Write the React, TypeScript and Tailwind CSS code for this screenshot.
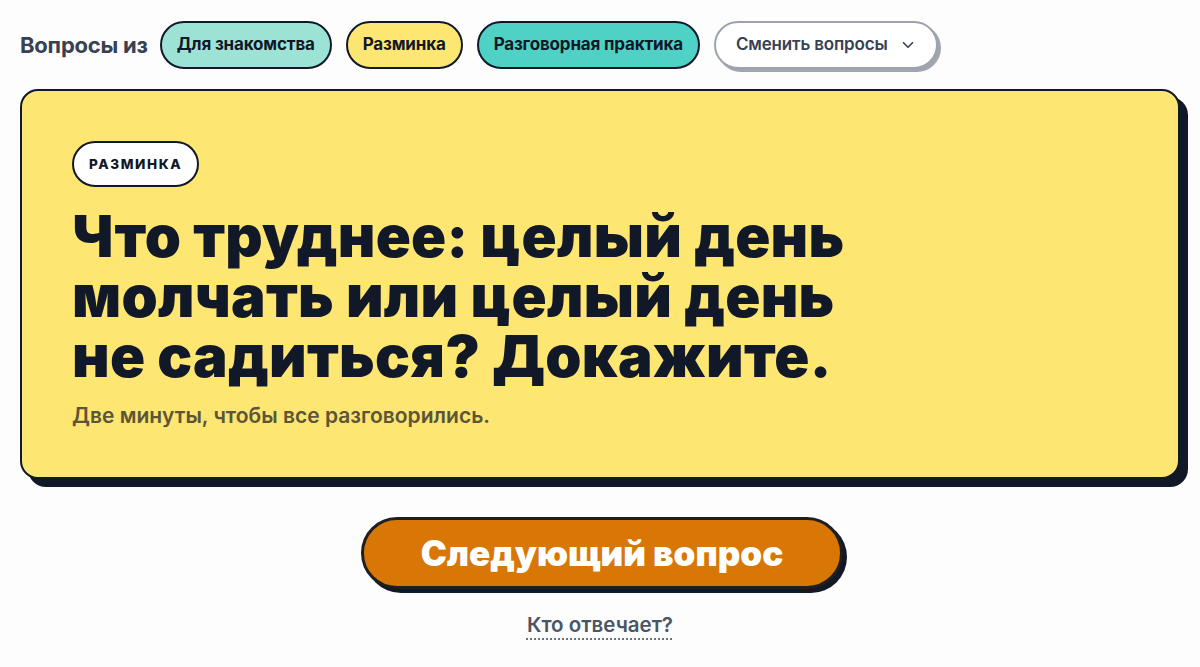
import React from "react";

const ui = { fontFamily: "Inter, 'Noto Sans', sans-serif" };

export default function App() {
  return (
    <div className="min-h-[667px] w-full bg-[#fdfdfd] text-[#111827]" style={ui}>
      <div className="flex items-center pl-5 pt-[21px]">
        <span className="mr-[12px] text-[22px] font-bold tracking-[-0.01em] text-[#374151]">Вопросы из</span>
        <div className="flex items-center gap-[14px]">
          <button className="h-[48px] rounded-full border-2 border-[#111827] bg-[#9ce3d5] px-[15px] text-[17px] font-bold tracking-[-0.01em] text-[#111827]">
            Для знакомства
          </button>
          <button className="h-[48px] rounded-full border-2 border-[#111827] bg-[#fde672] px-[15px] text-[17px] font-bold tracking-[-0.01em] text-[#111827]">
            Разминка
          </button>
          <button className="h-[48px] rounded-full border-2 border-[#111827] bg-[#4fd1c5] px-[15px] text-[17px] font-bold tracking-[-0.01em] text-[#111827]">
            Разговорная практика
          </button>
          <button className="flex h-[48px] items-center gap-[11px] rounded-full border-2 border-[#9ca3af] bg-white pl-[20px] pr-[19px] text-[17px] font-semibold tracking-[-0.01em] text-[#374151] shadow-[3px_3px_0_#a1a5ad]">
            Сменить вопросы
            <svg width="18" height="18" viewBox="0 0 24 24" fill="none" stroke="#374151" strokeWidth="2.2" strokeLinecap="round" strokeLinejoin="round">
              <path d="M6 9l6 6 6-6" />
            </svg>
          </button>
        </div>
      </div>

      <div className="mx-5 mt-[20px] h-[390px] rounded-[18px] border-2 border-[#111827] bg-[#fde672] px-[50px] pt-[50px] shadow-[8px_8px_0_#111827]">
        <div className="inline-flex h-[46px] items-center rounded-full border-2 border-[#111827] bg-white px-[15px] text-[13.5px] font-extrabold uppercase tracking-[0.12em] text-[#111827]">
          Разминка
        </div>
        <h1 className="mt-[19px] max-w-[800px] text-[58px] font-black leading-[60px] tracking-[0.005em] text-[#111827]">
          Что труднее: целый день молчать или целый день не садиться? Докажите.
        </h1>
        <p className="mt-[16px] text-[21px] font-semibold leading-[28px] text-[#5c5536]">
          Две минуты, чтобы все разговорились.
        </p>
      </div>

      <div className="mt-[38px] flex flex-col items-center">
        <button className="ml-[4px] h-[72px] w-[482px] rounded-full border-[3px] border-[#1f1f1f] bg-[#d97706] text-[35px] font-black text-white shadow-[4px_4px_0_#111827]">
          Следующий вопрос
        </button>
        <a className="mt-[21px] text-[20.5px] font-semibold text-[#4b5563] underline decoration-dotted decoration-2 underline-offset-[6px] decoration-[#6b7280]">
          Кто отвечает?
        </a>
      </div>
    </div>
  );
}
